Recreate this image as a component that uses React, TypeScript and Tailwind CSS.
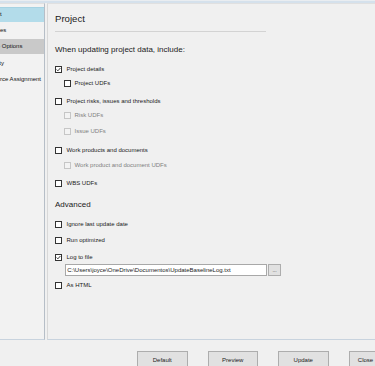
import React from "react";

type BoxProps = { checked?: boolean; disabled?: boolean };

function Box({ checked, disabled }: BoxProps) {
  return (
    <div
      className={
        "w-[7px] h-[7px] shrink-0 border flex items-center justify-center " +
        (disabled ? "border-[#c6c6c6] bg-[#f3f3f3]" : "border-[#333333] bg-white")
      }
    >
      {checked && (
        <svg width="5" height="5" viewBox="0 0 5 5">
          <polyline points="0.6,2.5 1.9,3.8 4.4,1" fill="none" stroke="#222" strokeWidth="0.9" />
        </svg>
      )}
    </div>
  );
}

type RowProps = {
  label: string;
  checked?: boolean;
  disabled?: boolean;
  sub?: boolean;
  mt: string;
};

function Row({ label, checked, disabled, sub, mt }: RowProps) {
  return (
    <div className={"flex items-center h-[7px] " + mt + (sub ? " ml-[8.5px]" : "")}>
      <Box checked={checked} disabled={disabled} />
      <span
        className={
          "text-[6px] leading-[7px] whitespace-nowrap " +
          (sub ? "ml-[4px] " : "ml-[4.5px] ") +
          (disabled ? "text-[#808080]" : "text-[#1a1a1a]")
        }
      >
        {label}
      </span>
    </div>
  );
}

function SideItem({ label, off, bg }: { label: string; off: string; bg?: string }) {
  return (
    <div className={"h-[15px] mb-[1.3px] w-[44px] overflow-hidden flex items-center " + (bg ?? "")}>
      <span className={"text-[6px] leading-[15px] whitespace-nowrap text-[#111] " + off}>{label}</span>
    </div>
  );
}

function Btn({ label, w }: { label: string; w: string }) {
  return (
    <div
      className={
        "h-[19px] shrink-0 bg-[#e1e1e1] border border-[#adadad] flex items-center justify-center text-[6px] text-[#1a1a1a] " +
        w
      }
    >
      {label}
    </div>
  );
}

export default function App() {
  return (
    <div className="w-[375px] h-[366px] bg-[#f0f0f0] overflow-hidden flex flex-col font-['Liberation_Sans',Arial,sans-serif]">
      <div className="h-[1px] shrink-0 bg-[#e9edf1]" />
      <div className="h-[1.5px] shrink-0 bg-[#d5e1ec]" />
      <div className="flex h-[337.5px] shrink-0">
        <aside className="w-[45px] shrink-0 border-t border-r border-b border-t-[#e0e0e0] border-r-[#b6bec7] border-b-[#c8d3de] bg-[#f2f2f2] overflow-hidden pt-[3.2px]">
          <SideItem label="Project" off="ml-[-17px]" bg="bg-[#b3dcea] border-t border-[#a6d2e2]" />
          <SideItem label="Activities" off="ml-[-17.4px]" />
          <SideItem label="Update Options" off="ml-[-19.3px]" bg="bg-[#c9c9c9]" />
          <SideItem label="Activity" off="ml-[-15px]" />
          <SideItem label="Resource Assignment" off="ml-[-17.4px]" />
        </aside>
        <main className="flex-1 ml-[2px] border-t border-l border-b border-t-[#e0e0e0] border-l-[#d8d8d8] border-b-[#c8d3de] pl-[7px] pt-[9.2px] flex flex-col">
          <div className="text-[9.6px] leading-[12px] h-[12px] text-[#1a1a1a]">Project</div>
          <div className="mt-[6.3px] h-[1px] w-[211px] bg-[#d3d3d3]" />
          <div className="mt-[12.8px] text-[8px] leading-[10px] h-[10px] text-[#1a1a1a]">
            When updating project data, include:
          </div>
          <Row label="Project details" checked mt="mt-[11.2px]" />
          <Row label="Project UDFs" sub mt="mt-[7.2px]" />
          <Row label="Project risks, issues and thresholds" mt="mt-[11.3px]" />
          <Row label="Risk UDFs" sub disabled mt="mt-[7px]" />
          <Row label="Issue UDFs" sub disabled mt="mt-[9px]" />
          <Row label="Work products and documents" mt="mt-[12px]" />
          <Row label="Work product and document UDFs" sub disabled mt="mt-[7.3px]" />
          <Row label="WBS UDFs" mt="mt-[11px]" />
          <div className="mt-[13.4px] text-[8px] leading-[10px] h-[10px] text-[#1a1a1a]">Advanced</div>
          <Row label="Ignore last update date" mt="mt-[11px]" />
          <Row label="Run optimized" mt="mt-[8.6px]" />
          <Row label="Log to file" checked mt="mt-[9.9px]" />
          <div className="mt-[3.5px] ml-[10px] flex h-[12px]">
            <div className="w-[202px] h-[12px] bg-white border border-[#a8a8a8] flex items-center pl-[1.2px] text-[6px] text-[#1a1a1a] whitespace-nowrap overflow-hidden">
              {"C:\\Users\\joyce\\OneDrive\\Documentos\\UpdateBaselineLog.txt"}
            </div>
            <div className="ml-[1px] w-[13px] h-[12px] bg-[#e1e1e1] border border-[#adadad] flex items-end justify-center pb-[2px] text-[5px] leading-[5px] text-[#333]">
              ...
            </div>
          </div>
          <Row label="As HTML" mt="mt-[5.6px]" />
        </main>
      </div>
      <div className="flex mt-[11px] pl-[137px] gap-[20px]">
        <Btn label="Default" w="w-[50.5px]" />
        <Btn label="Preview" w="w-[50.5px]" />
        <Btn label="Update" w="w-[50.5px]" />
        <Btn label="Close" w="w-[34px]" />
      </div>
    </div>
  );
}
